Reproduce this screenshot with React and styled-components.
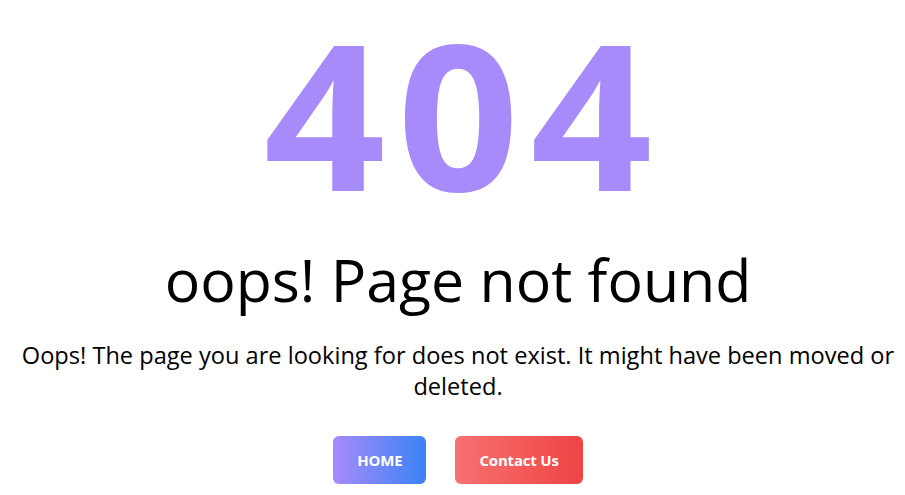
import React from 'react';
import styled, { createGlobalStyle } from 'styled-components';

const GlobalStyle = createGlobalStyle`
  html, body {
    margin: 0;
    padding: 0;
    background: #ffffff;
  }

  body {
    font-family: 'Open Sans', 'Noto Sans', sans-serif;
    color: #000;
  }
`;

function App() {
  return (
    <>
      <GlobalStyle />
      <Page>
        <Code>404</Code>
        <Title>oops! Page not found</Title>
        <Message>
          Oops! The page you are looking for does not exist. It might have been
          moved or deleted.
        </Message>
        <Actions>
          <ActionButton href="#" $from="#a78bfa" $to="#3b82f6">
            HOME
          </ActionButton>
          <ActionButton href="#" $from="#f87171" $to="#ef4444">
            Contact Us
          </ActionButton>
        </Actions>
      </Page>
    </>
  );
}

const Page = styled.main`
  min-height: 495px;
  box-sizing: border-box;
  display: flex;
  flex-direction: column;
  align-items: center;
  text-align: center;
  padding: 12px 0 0 11px;
`;

const Code = styled.h1`
  margin: 0;
  font-size: 203px;
  line-height: 200px;
  font-weight: 700;
  letter-spacing: 11px;
  text-indent: 11px;
  color: #a78bfa;
  transform: scaleX(1.05);
`;

const Title = styled.h2`
  margin: 32px 0 0;
  font-size: 59px;
  line-height: 70px;
  font-weight: 500;
`;

const Message = styled.p`
  margin: 26px 0 0;
  font-size: 23.6px;
  line-height: 31px;
  font-weight: 500;
`;

const Actions = styled.div`
  display: flex;
  gap: 29px;
  margin-top: 34px;
`;

const ActionButton = styled.a`
  display: inline-block;
  padding: 12px 24px;
  border-radius: 6px;
  font-size: 15px;
  line-height: 24px;
  font-weight: 700;
  letter-spacing: -0.2px;
  color: #fff;
  text-decoration: none;
  background: linear-gradient(to right, ${(p) => p.$from}, ${(p) => p.$to});
`;

export default App;
